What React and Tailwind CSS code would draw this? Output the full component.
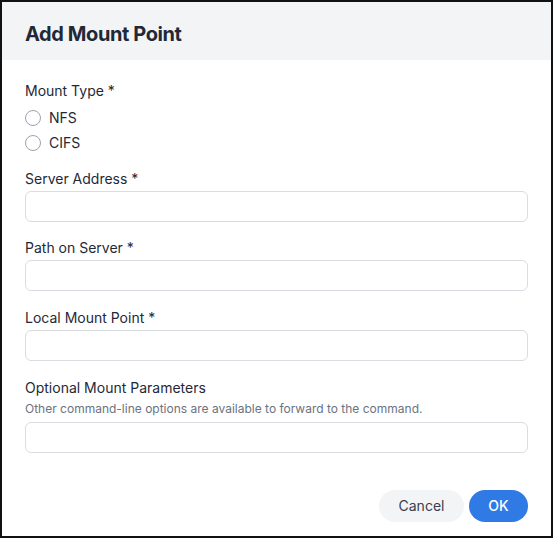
import React, { useState } from 'react';

const Field = ({ label, hint, className = '' }) => (
  <div className={className}>
    <label className="block text-sm leading-5 text-[#1f2937]">{label}</label>
    {hint && <p className="mt-[3px] text-xs leading-4 text-[#6b7280]">{hint}</p>}
    <input
      type="text"
      className={`${hint ? 'mt-[5px]' : 'mt-[2px]'} block h-[31px] w-full rounded-md border border-[#d9dce1] bg-white px-3 text-sm outline-none`}
    />
  </div>
);

const Radio = ({ label, checked, onChange }) => (
  <label className="flex h-[25px] items-center gap-2 text-sm text-[#1f2937]">
    <span
      onClick={onChange}
      className={`h-4 w-4 rounded-full border ${
        checked ? 'border-[#2f7ae5] border-[5px]' : 'border-[#9ca3af]'
      }`}
    />
    {label}
  </label>
);

const App = () => {
  const [type, setType] = useState(null);

  return (
    <div
      className="flex h-[538px] w-full flex-col border-2 border-[#111] bg-white"
      style={{ fontFamily: 'Inter, "Noto Sans", sans-serif' }}
    >
      <div className="flex h-[58px] items-center bg-[#f3f4f6] px-[23px] pt-[5px]">
        <h1 className="text-xl font-bold tracking-[-0.02em] text-[#1f2937]">Add Mount Point</h1>
      </div>

      <div className="flex flex-1 flex-col px-[23px] pt-[21px]">
        <div>
          <div className="text-sm leading-5 text-[#1f2937]">Mount Type *</div>
          <div className="mt-[4px]">
            <Radio label="NFS" checked={type === 'nfs'} onChange={() => setType('nfs')} />
            <Radio label="CIFS" checked={type === 'cifs'} onChange={() => setType('cifs')} />
          </div>
        </div>

        <Field label="Server Address *" className="mt-[14px]" />
        <Field label="Path on Server *" className="mt-[16px]" />
        <Field label="Local Mount Point *" className="mt-[17px]" />
        <Field
          label="Optional Mount Parameters"
          hint="Other command-line options are available to forward to the command."
          className="mt-[17px]"
        />

        <div className="mt-[37px] flex justify-end gap-[5px]">
          <button className="h-8 w-[85px] rounded-full bg-[#f3f4f6] text-sm text-[#374151]">
            Cancel
          </button>
          <button className="h-8 w-[59px] rounded-full bg-[#2f7ae5] text-sm font-medium text-white">
            OK
          </button>
        </div>
      </div>
    </div>
  );
};

export default App;
